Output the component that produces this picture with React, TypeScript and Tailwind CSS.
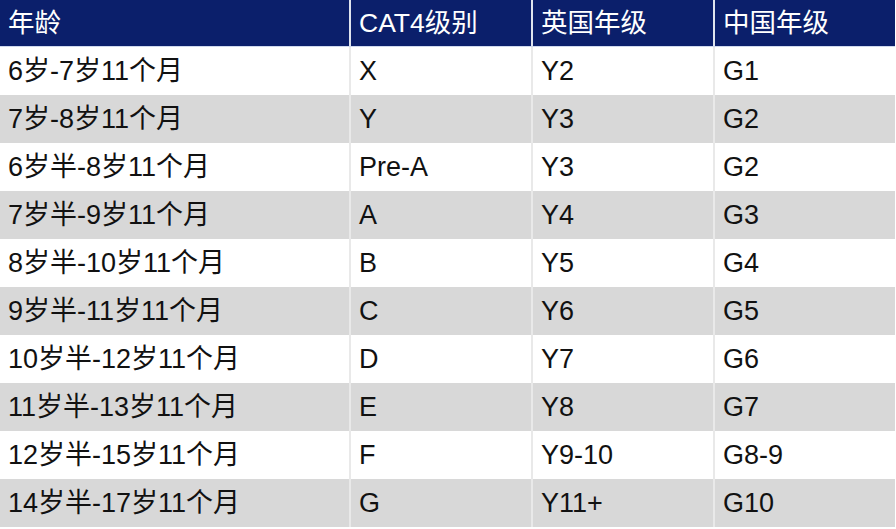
const rows: [string, string, string, string][] = [
  ['6岁-7岁11个月', 'X', 'Y2', 'G1'],
  ['7岁-8岁11个月', 'Y', 'Y3', 'G2'],
  ['6岁半-8岁11个月', 'Pre-A', 'Y3', 'G2'],
  ['7岁半-9岁11个月', 'A', 'Y4', 'G3'],
  ['8岁半-10岁11个月', 'B', 'Y5', 'G4'],
  ['9岁半-11岁11个月', 'C', 'Y6', 'G5'],
  ['10岁半-12岁11个月', 'D', 'Y7', 'G6'],
  ['11岁半-13岁11个月', 'E', 'Y8', 'G7'],
  ['12岁半-15岁11个月', 'F', 'Y9-10', 'G8-9'],
  ['14岁半-17岁11个月', 'G', 'Y11+', 'G10'],
];

const headers = ['年龄', 'CAT4级别', '英国年级', '中国年级'];

const font = { fontFamily: '"Liberation Sans", "Noto Sans CJK SC", sans-serif' };

export default function App() {
  return (
    <div className="w-[896px] h-[529px] bg-white overflow-hidden" style={font}>
      <div className="w-[895px]">
        {/* 表头 */}
        <div className="grid grid-cols-[349px_180px_180px_180px] gap-x-[2px] bg-[#dfe4ee] border-b border-[#cfd9ee]">
          {headers.map((h) => (
            <div key={h} className="h-[46px] bg-[#0b1f6b] text-white text-[26.5px] leading-[46px] pl-[8px]">
              {h}
            </div>
          ))}
        </div>
        {/* 数据行 */}
        {rows.map((r, i) => (
          <div key={i} className="grid grid-cols-[349px_180px_180px_180px] gap-x-[2px] bg-[#e9e9e9]">
            {r.map((c, j) => (
              <div
                key={j}
                className={`h-[48px] leading-[49px] text-[27px] text-[#111] pl-[8px] whitespace-nowrap ${
                  i % 2 === 1 ? 'bg-[#d8d8d8]' : 'bg-white'
                }`}
              >
                {c}
              </div>
            ))}
          </div>
        ))}
      </div>
    </div>
  );
}
